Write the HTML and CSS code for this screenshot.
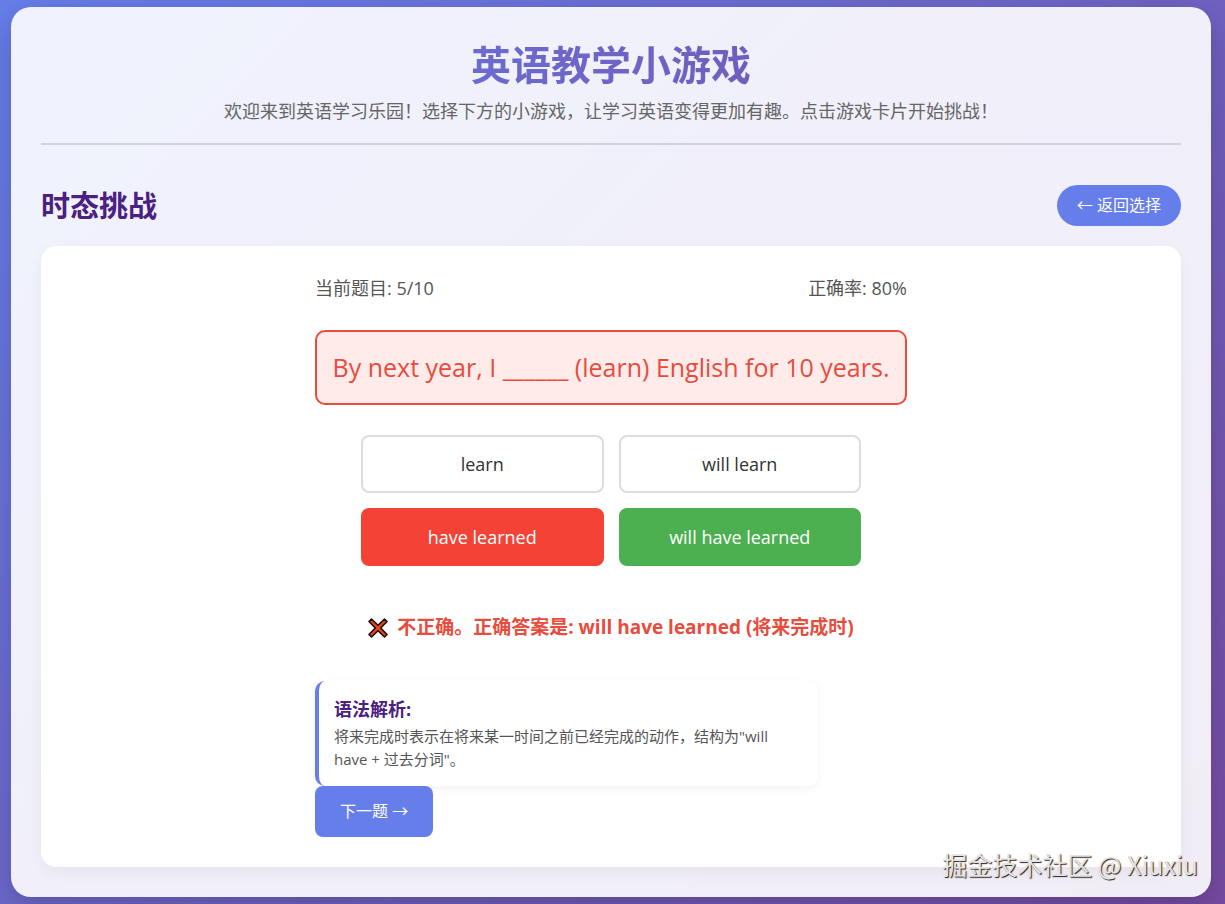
FILE: index.html
```html
<!DOCTYPE html>
<html lang="zh-CN">
<head>
<meta charset="utf-8">
<meta name="viewport" content="width=device-width, initial-scale=1">
<title>英语教学小游戏</title>
<link rel="stylesheet" href="styles.css">
</head>
<body>
<div class="container">
  <header class="header">
    <h1 class="title">英语教学小游戏</h1>
    <p class="subtitle">欢迎来到英语学习乐园！选择下方的小游戏，让学习英语变得更加有趣。点击游戏卡片开始挑战！</p>
  </header>
  <main class="game">
    <div class="game-header">
      <h2 class="game-title">时态挑战</h2>
      <button class="back" type="button">← 返回选择</button>
    </div>
    <section class="card">
      <div class="quiz">
        <div class="stats"><span>当前题目: 5/10</span><span>正确率: 80%</span></div>
        <p class="question">By next year, I ______ (learn) English for 10 years.</p>
        <div class="options">
          <button class="option" type="button">learn</button>
          <button class="option" type="button">will learn</button>
          <button class="option wrong" type="button">have learned</button>
          <button class="option right" type="button">will have learned</button>
        </div>
        <p class="feedback">
          <svg class="cross" viewBox="0 0 20 20" aria-hidden="true"><path d="M3.5 1 10 7.3 16.500 1 19 3.500 12.700 10 19 16.500 16.500 19 10 12.700 3.500 19 1 16.500 7.300 10 1 3.500Z" fill="#e8421c" stroke="#1c1010" stroke-width="1.600" stroke-linejoin="round"/></svg>
          <span>不正确。正确答案是: will have learned (将来完成时)</span>
        </p>
        <div class="explanation">
          <h3 class="explanation-title">语法解析:</h3>
          <p class="explanation-text">将来完成时表示在将来某一时间之前已经完成的动作，结构为"will have + 过去分词"。</p>
        </div>
        <button class="next" type="button">下一题 →</button>
      </div>
    </section>
  </main>
</div>
<div class="watermark">掘金技术社区 @ Xiuxiu</div>
</body>
</html>
```
FILE: styles.css
```css
* {
  box-sizing: border-box;
  margin: 0;
  padding: 0;
}

body {
  min-height: 100vh;
  padding: 7px 14px 7px 11px;
  position: relative;
  background: linear-gradient(135deg, #667eea 0%, #764ba2 100%);
  font-family: "Open Sans", "Noto Sans CJK SC", sans-serif;
  color: #333;
}

button {
  font-family: inherit;
  cursor: pointer;
}

.container {
  max-width: 1200px;
  margin: 0 auto;
  padding: 30px;
  border-radius: 20px;
  background: rgba(255, 255, 255, 0.9);
  box-shadow: 0 10px 30px rgba(0, 0, 0, 0.2);
}

.header {
  padding-bottom: 19px;
  margin-bottom: 40px;
  border-bottom: 2px solid #d5d3e2;
  text-align: center;
}

.title {
  font-size: 40px;
  line-height: 56px;
  background: linear-gradient(90deg, #667eea, #764ba2);
  -webkit-background-clip: text;
  background-clip: text;
  color: transparent;
}

.subtitle {
  margin-top: 5px;
  font-size: 18px;
  line-height: 26px;
  color: #666;
}

.game-header {
  display: flex;
  justify-content: space-between;
  align-items: center;
  margin-bottom: 20px;
}

.game-title {
  font-size: 29px;
  line-height: 41px;
  color: #4a2080;
}

.back {
  padding: 0 20px;
  border: 0;
  border-radius: 25px;
  background: #667eea;
  color: #fff;
  font-size: 16px;
  line-height: 41px;
}

.card {
  padding: 30px;
  border-radius: 15px;
  background: #fff;
  box-shadow: 0 5px 15px rgba(0, 0, 0, 0.05);
}

.quiz {
  max-width: 592px;
  margin: 0 auto;
}

.stats {
  display: flex;
  justify-content: space-between;
  margin-bottom: 30px;
  font-size: 18px;
  line-height: 24px;
  color: #555;
}

.question {
  padding: 18px 8px;
  margin-bottom: 30px;
  border: 2px solid #e74c3c;
  border-radius: 10px;
  background: #feebea;
  color: #e74c3c;
  font-size: 25px;
  line-height: 35px;
  text-align: center;
}

.options {
  display: grid;
  grid-template-columns: 1fr 1fr;
  gap: 15px;
  max-width: 500px;
  margin: 0 auto 44px;
}

.option {
  padding: 15px;
  border: 2px solid #ddd;
  border-radius: 8px;
  background: #fff;
  color: #333;
  font-size: 18px;
  line-height: 24px;
}

.wrong {
  border-color: #f44336;
  background: #f44336;
  color: #fff;
}

.right {
  border-color: #4caf50;
  background: #4caf50;
  color: #fff;
}

.feedback {
  display: flex;
  justify-content: center;
  align-items: center;
  gap: 9px;
  margin-bottom: 36px;
  color: #e74c3c;
  font-size: 19px;
  font-weight: 700;
  line-height: 35px;
}

.cross {
  width: 20px;
  height: 20px;
}

.explanation {
  max-width: 503px;
  padding: 16px 15px 15px;
  border-left: 4px solid #667eea;
  border-radius: 10px;
  background: #fff;
  box-shadow: 0 3px 10px rgba(0, 0, 0, 0.05);
}

.explanation-title {
  margin-bottom: 4px;
  font-size: 18px;
  line-height: 24px;
  color: #4a2080;
}

.explanation-text {
  font-size: 15px;
  line-height: 23px;
  color: #555;
}

.next {
  display: block;
  padding: 0 25px;
  border: 0;
  border-radius: 8px;
  background: #667eea;
  color: #fff;
  font-size: 16px;
  line-height: 51px;
}

.watermark {
  position: absolute;
  right: 27px;
  bottom: 22px;
  color: #e4e4e4;
  font-family: "Noto Sans CJK SC", sans-serif;
  font-size: 25px;
  line-height: 36px;
  text-shadow: 1px 1px 1px #222;
}
```
